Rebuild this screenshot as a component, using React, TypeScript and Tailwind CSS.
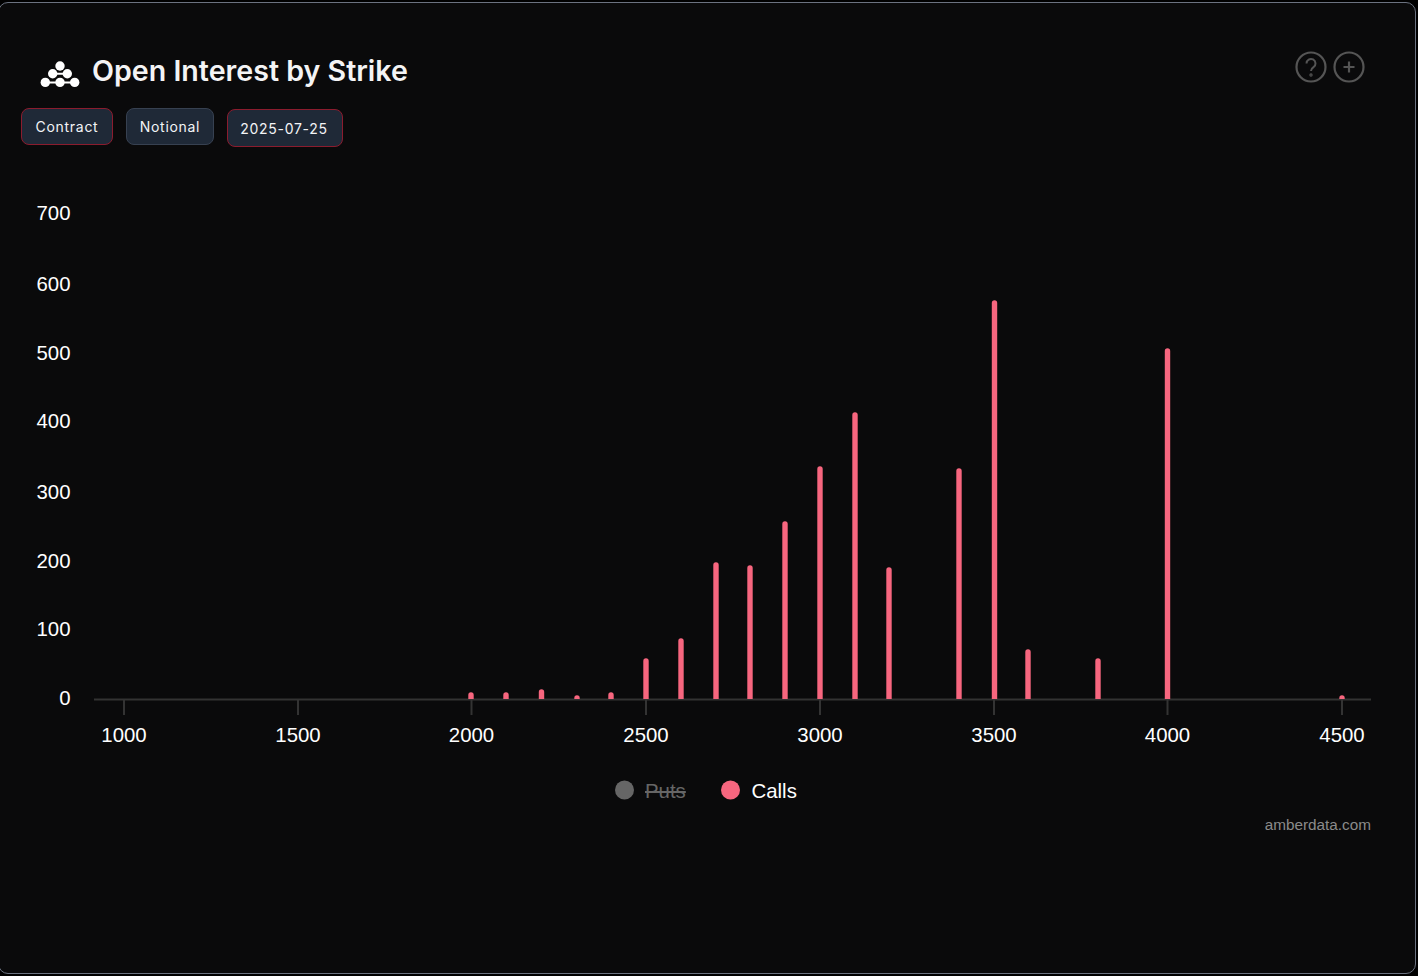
import { Fragment } from "react";

const bars = [
  { x: 471, top: 693 },
  { x: 506, top: 693 },
  { x: 541.5, top: 690 },
  { x: 577, top: 696 },
  { x: 611, top: 693 },
  { x: 646, top: 659 },
  { x: 681, top: 639 },
  { x: 716, top: 563 },
  { x: 750, top: 566 },
  { x: 785, top: 522 },
  { x: 820, top: 467 },
  { x: 855, top: 413 },
  { x: 889, top: 568 },
  { x: 959, top: 469 },
  { x: 994.5, top: 301 },
  { x: 1028, top: 650 },
  { x: 1098, top: 659 },
  { x: 1167.5, top: 349 },
  { x: 1342, top: 696 },
];

const yLabels = [
  { label: "700", y: 213 },
  { label: "600", y: 284 },
  { label: "500", y: 353 },
  { label: "400", y: 421 },
  { label: "300", y: 492 },
  { label: "200", y: 561 },
  { label: "100", y: 629 },
  { label: "0", y: 698 },
];

const xLabels = [
  { label: "1000", x: 124 },
  { label: "1500", x: 298 },
  { label: "2000", x: 471.5 },
  { label: "2500", x: 646 },
  { label: "3000", x: 820 },
  { label: "3500", x: 994 },
  { label: "4000", x: 1167.5 },
  { label: "4500", x: 1342 },
];

const BASE = 699;

const Logo = () => (
  <svg width="40" height="28" viewBox="0 0 40 28" fill="white" className="mt-[8px] ml-[40px]">
    <circle cx="20" cy="5" r="4.7" />
    <circle cx="12.7" cy="12.8" r="4.7" />
    <circle cx="27.3" cy="12.8" r="4.7" />
    <circle cx="5.3" cy="21.4" r="4.7" />
    <circle cx="20" cy="21.4" r="4.7" />
    <circle cx="34.7" cy="21.4" r="4.7" />
    <path d="M12.7 12.8H27.3M5.3 21.4H34.7" fill="none" stroke="white" strokeWidth="2" />
  </svg>
);

const Chart = () => (
  <svg width="1418" height="660" viewBox="0 160 1418 660" className="block" fontFamily="'Liberation Sans', Arial, sans-serif">
    {yLabels.map((t) => (
      <text key={t.label} x="70.5" y={t.y + 7} textAnchor="end" fontSize="20.4" fill="#fff">
        {t.label}
      </text>
    ))}
    <line x1="94" x2="1371" y1="699.5" y2="699.5" stroke="#333" strokeWidth="2" />
    {xLabels.map((t) => (
      <Fragment key={t.label}>
        <line x1={t.x} x2={t.x} y1="699" y2="715" stroke="#333" strokeWidth="2" />
        <text x={t.x} y="742" textAnchor="middle" fontSize="20.4" fill="#fff">
          {t.label}
        </text>
      </Fragment>
    ))}
    {bars.map((b) => (
      <path
        key={b.x}
        d={`M${b.x - 2.7} ${BASE}V${b.top + 2}a2.7 2.7 0 0 1 5.4 0V${BASE}Z`}
        fill="#f7667f"
      />
    ))}
    <circle cx="624.5" cy="790" r="9.5" fill="#666" />
    <text x="645" y="798" fontSize="20.4" fill="#666" textDecoration="line-through">
      Puts
    </text>
    <circle cx="730.5" cy="790" r="9.5" fill="#f7667f" />
    <text x="751.5" y="798" fontSize="20.4" fill="#fff">
      Calls
    </text>
  </svg>
);

export default function App() {
  return (
    <div className="h-[976px] w-[1418px] overflow-hidden bg-black font-['Inter',sans-serif]">
      <div className="relative ml-[-2px] mt-[2px] h-[972px] w-[1418px] rounded-[10px] border border-[#6b7280] bg-[#0a0a0b]">
        {/* Header */}
        <div className="flex items-center justify-between pt-[50px] pr-[50px] pl-[1px]">
          <div className="flex items-center gap-[12px]">
            <Logo />
            <h1 className="text-[28.6px] leading-[36px] font-semibold text-[#f4f4f5]">Open Interest by Strike</h1>
          </div>
          <div className="mt-[-8px] flex gap-[6px]">
            <svg width="32" height="32" viewBox="0 0 32 32" fill="none" stroke="#555" strokeWidth="2.2">
              <circle cx="16" cy="16" r="14.5" />
              <path d="M11.5 12.5a4.5 4.5 0 1 1 7 3.7c-1.5 1-2.5 1.8-2.5 3.8" strokeWidth="2" />
              <circle cx="16" cy="24" r="0.6" />
            </svg>
            <svg width="32" height="32" viewBox="0 0 32 32" fill="none" stroke="#555" strokeWidth="2.2">
              <circle cx="16" cy="16" r="14.5" />
              <path d="M16 10.5v11M10.5 16h11" />
            </svg>
          </div>
        </div>

        {/* Buttons */}
        <div className="mt-[19px] ml-[22px] flex items-start gap-[13px] text-[14px] tracking-[0.05em] text-[#f3f4f6]">
          <button className="h-[37px] w-[92px] rounded-[8px] border border-[#8b1c2e] bg-[#1f2937]">Contract</button>
          <button className="h-[37px] w-[88px] rounded-[8px] border border-[#374151] bg-[#1f2937]">Notional</button>
          <button className="mt-[1px] h-[38px] w-[116px] rounded-[8px] border border-[#8b1c2e] bg-[#1f2937] pr-[2px]">2025-07-25</button>
        </div>

        {/* Chart */}
        <div className="ml-[1px] mt-[13px]">
          <Chart />
        </div>

        <div className="absolute right-[44px] top-[811px] font-['Liberation_Sans',sans-serif] text-[15.3px] text-[#8a8a8a]">
          amberdata.com
        </div>
      </div>
    </div>
  );
}
